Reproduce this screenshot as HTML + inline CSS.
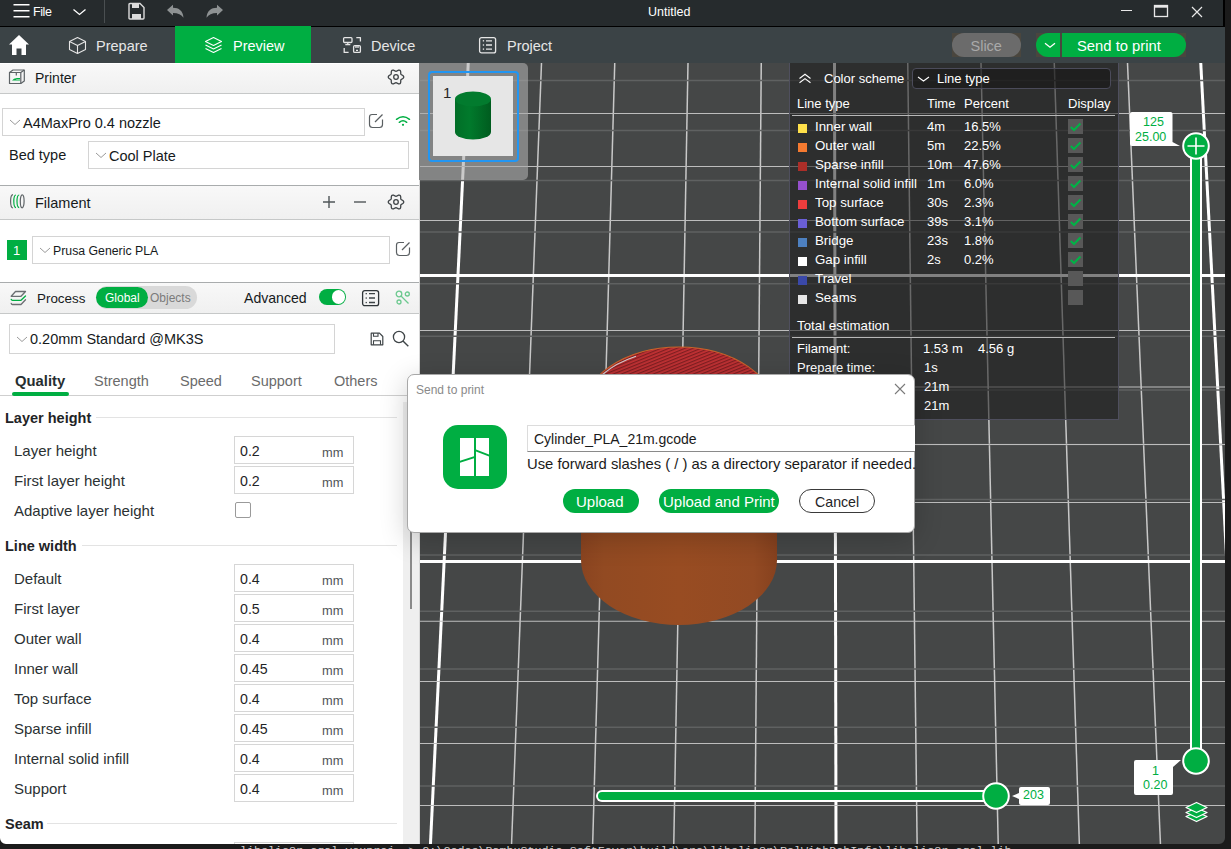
<!DOCTYPE html>
<html><head><meta charset="utf-8"><title>Bambu Studio - Send to print</title>
<style>
html,body{margin:0;padding:0;width:1231px;height:849px;overflow:hidden;background:#1b1b1b;font-family:"Liberation Sans",sans-serif}
.t{position:absolute;white-space:pre;line-height:20px;height:20px}
svg{display:block}
</style></head><body>
<div style="position:absolute;left:419px;top:63px;width:806px;height:781px;box-sizing:border-box;background:#454747"></div>
<svg style="position:absolute;left:420px;top:63px" width="805" height="781" viewBox="0 0 805 781"><line x1="-98.25" y1="0" x2="-151.77" y2="781" stroke="#c8c8c8" stroke-width="1.5"/><line x1="-25.00" y1="0" x2="-70.66" y2="781" stroke="#c8c8c8" stroke-width="1.5"/><line x1="48.25" y1="0" x2="10.45" y2="781" stroke="#ffffff" stroke-width="3"/><line x1="121.50" y1="0" x2="91.56" y2="781" stroke="#c8c8c8" stroke-width="1.5"/><line x1="194.75" y1="0" x2="172.67" y2="781" stroke="#c8c8c8" stroke-width="1.5"/><line x1="268.00" y1="0" x2="253.78" y2="781" stroke="#c8c8c8" stroke-width="1.5"/><line x1="341.25" y1="0" x2="334.89" y2="781" stroke="#c8c8c8" stroke-width="1.5"/><line x1="414.50" y1="0" x2="416.00" y2="781" stroke="#ffffff" stroke-width="3"/><line x1="487.75" y1="0" x2="497.11" y2="781" stroke="#c8c8c8" stroke-width="1.5"/><line x1="561.00" y1="0" x2="578.22" y2="781" stroke="#c8c8c8" stroke-width="1.5"/><line x1="634.25" y1="0" x2="659.33" y2="781" stroke="#c8c8c8" stroke-width="1.5"/><line x1="707.50" y1="0" x2="740.44" y2="781" stroke="#c8c8c8" stroke-width="1.5"/><line x1="780.75" y1="0" x2="821.55" y2="781" stroke="#ffffff" stroke-width="3"/><line x1="854.00" y1="0" x2="902.66" y2="781" stroke="#c8c8c8" stroke-width="1.5"/><line x1="927.25" y1="0" x2="983.77" y2="781" stroke="#c8c8c8" stroke-width="1.5"/><line x1="0" y1="17.40" x2="805" y2="17.40" stroke="#5f6161" stroke-width="1.5"/><line x1="0" y1="67.50" x2="805" y2="67.50" stroke="#5f6161" stroke-width="1.5"/><line x1="0" y1="117.40" x2="805" y2="117.40" stroke="#5f6161" stroke-width="1.5"/><line x1="0" y1="168.90" x2="805" y2="168.90" stroke="#5f6161" stroke-width="1.5"/><line x1="0" y1="220.70" x2="805" y2="220.70" stroke="#5f6161" stroke-width="1.5"/><line x1="0" y1="273.20" x2="805" y2="273.20" stroke="#5f6161" stroke-width="1.5"/><line x1="0" y1="327.00" x2="805" y2="327.00" stroke="#5f6161" stroke-width="1.5"/><line x1="0" y1="381.50" x2="805" y2="381.50" stroke="#5f6161" stroke-width="1.5"/><line x1="0" y1="436.60" x2="805" y2="436.60" stroke="#5f6161" stroke-width="1.5"/><line x1="0" y1="492.00" x2="805" y2="492.00" stroke="#5f6161" stroke-width="1.5"/><line x1="0" y1="548.30" x2="805" y2="548.30" stroke="#5f6161" stroke-width="1.5"/><line x1="0" y1="605.90" x2="805" y2="605.90" stroke="#5f6161" stroke-width="1.5"/><line x1="0" y1="664.20" x2="805" y2="664.20" stroke="#5f6161" stroke-width="1.5"/><line x1="0" y1="723.10" x2="805" y2="723.10" stroke="#5f6161" stroke-width="1.5"/><line x1="0" y1="50.50" x2="805" y2="50.50" stroke="#bdbdbd" stroke-width="1.05"/><line x1="0" y1="103.50" x2="805" y2="103.50" stroke="#bdbdbd" stroke-width="1.05"/><line x1="0" y1="157.50" x2="805" y2="157.50" stroke="#bdbdbd" stroke-width="1.05"/><line x1="0" y1="267.50" x2="805" y2="267.50" stroke="#bdbdbd" stroke-width="1.05"/><line x1="0" y1="324.00" x2="805" y2="324.00" stroke="#bdbdbd" stroke-width="1.05"/><line x1="0" y1="381.50" x2="805" y2="381.50" stroke="#bdbdbd" stroke-width="1.05"/><line x1="0" y1="439.50" x2="805" y2="439.50" stroke="#bdbdbd" stroke-width="1.05"/><line x1="0" y1="558.30" x2="805" y2="558.30" stroke="#bdbdbd" stroke-width="1.05"/><line x1="0" y1="618.50" x2="805" y2="618.50" stroke="#bdbdbd" stroke-width="1.05"/><line x1="0" y1="680.50" x2="805" y2="680.50" stroke="#bdbdbd" stroke-width="1.05"/><line x1="0" y1="742.50" x2="805" y2="742.50" stroke="#bdbdbd" stroke-width="1.05"/><line x1="0" y1="212.50" x2="805" y2="212.50" stroke="#ffffff" stroke-width="3"/><line x1="0" y1="498.50" x2="805" y2="498.50" stroke="#ffffff" stroke-width="3"/></svg>
<svg style="position:absolute;left:0;top:0" width="1231" height="849" viewBox="0 0 1231 849">
<defs>
 <pattern id="hatch" width="3" height="3" patternUnits="userSpaceOnUse" patternTransform="rotate(-22)">
   <rect width="3" height="3" fill="#c23234"/><rect width="3" height="1.2" fill="#7e1e21"/>
 </pattern>
 <linearGradient id="body" x1="0" x2="1" y1="0" y2="0">
   <stop offset="0" stop-color="#8a4420"/><stop offset="0.12" stop-color="#924a22"/><stop offset="0.5" stop-color="#984c22"/><stop offset="0.88" stop-color="#934a23"/><stop offset="1" stop-color="#86411e"/>
 </linearGradient>
</defs>
<path d="M581,414 L581,560 A98,65 0 0 0 777,560 L777,414 Z" fill="url(#body)"/>
<ellipse cx="679" cy="414" rx="98" ry="67" fill="url(#hatch)" stroke="#c8642a" stroke-width="1.2"/>
<path d="M602.5,374.5 A96.3,65.3 0 0 1 636,356.3" fill="none" stroke="#cfcfcf" stroke-width="1.1"/>
</svg>
<div style="position:absolute;left:419px;top:63px;width:109px;height:117px;box-sizing:border-box;background:rgba(170,170,170,0.62);border-radius:0 5px 5px 0"></div>
<div style="position:absolute;left:428px;top:71px;width:91px;height:91px;box-sizing:border-box;border:2px solid #2196f3;border-radius:4px"></div>
<div style="position:absolute;left:433px;top:76px;width:80px;height:80px;box-sizing:border-box;background:#e6e6e6"></div>
<div class="t" style="left:443px;top:83px;font-size:15px;color:#262626;font-weight:normal;font-family:'Liberation Sans',sans-serif;">1</div>
<svg style="position:absolute;left:454px;top:90px;overflow:visible;" width="38" height="52" viewBox="0 0 38 52">
<defs><linearGradient id="gc" x1="0" x2="1"><stop offset="0" stop-color="#016e27"/><stop offset="0.4" stop-color="#017a2c"/><stop offset="1" stop-color="#005c1f"/></linearGradient></defs>
<path d="M1,9 L1,42 A18,7.5 0 0 0 37,42 L37,9 Z" fill="url(#gc)"/>
<ellipse cx="19" cy="9" rx="18" ry="7.5" fill="#027b2e"/>
</svg>
<div style="position:absolute;left:1190px;top:146px;width:12px;height:615px;box-sizing:border-box;background:#fff"></div>
<div style="position:absolute;left:1192px;top:146px;width:8px;height:615px;box-sizing:border-box;background:#00ae42"></div>
<svg style="position:absolute;left:1182px;top:132px;overflow:visible;" width="28" height="28" viewBox="0 0 28 28"><circle cx="14" cy="14" r="12.8" fill="#00ae42" stroke="#fff" stroke-width="2"/><path d="M14,5.5 V22.5 M5.5,14 H22.5" stroke="#fff" stroke-width="1.6"/></svg>
<svg style="position:absolute;left:1182px;top:747px;overflow:visible;" width="28" height="28" viewBox="0 0 28 28"><circle cx="14" cy="14" r="12.8" fill="#00ae42" stroke="#fff" stroke-width="2"/></svg>
<svg style="position:absolute;left:1129px;top:111px;overflow:visible;" width="53" height="36" viewBox="0 0 53 36"><path d="M3,1 H41.5 Q43.5,1 43.5,3 V31 L51,35 H3 Q1,35 1,33 V3 Q1,1 3,1 Z" fill="#fff"/></svg>
<div class="t" style="left:1143px;top:112px;font-size:12.5px;color:#00ae42;font-weight:normal;font-family:'Liberation Sans',sans-serif;">125</div>
<div class="t" style="left:1135px;top:127px;font-size:12.5px;color:#00ae42;font-weight:normal;font-family:'Liberation Sans',sans-serif;">25.00</div>
<svg style="position:absolute;left:1133px;top:759px;overflow:visible;" width="50" height="37" viewBox="0 0 50 37"><path d="M3,1 H40 L48,1 L40,8 V34 Q40,36 38,36 H3 Q1,36 1,34 V3 Q1,1 3,1 Z" fill="#fff"/></svg>
<div class="t" style="left:1152px;top:761px;font-size:12.5px;color:#00ae42;font-weight:normal;font-family:'Liberation Sans',sans-serif;">1</div>
<div class="t" style="left:1143px;top:775px;font-size:12.5px;color:#00ae42;font-weight:normal;font-family:'Liberation Sans',sans-serif;">0.20</div>
<svg style="position:absolute;left:1184px;top:801px;overflow:visible;" width="26" height="23" viewBox="0 0 26 23"><g fill="#00ae42" stroke="#fff" stroke-width="1.3" stroke-linejoin="round">
<path d="M12.5,11 L23,15.5 L12.5,20.5 L2,15.5 Z"/>
<path d="M12.5,7 L23,11.5 L12.5,16.5 L2,11.5 Z"/>
<path d="M12.5,1.5 L23,6.5 L12.5,11.5 L2,6.5 Z"/></g></svg>
<div style="position:absolute;left:596px;top:790px;width:400px;height:12px;box-sizing:border-box;background:#fff;border-radius:6px"></div>
<div style="position:absolute;left:598px;top:792px;width:400px;height:8px;box-sizing:border-box;background:#00ae42;border-radius:4px 0 0 4px"></div>
<svg style="position:absolute;left:982px;top:782px;overflow:visible;" width="28" height="28" viewBox="0 0 28 28"><circle cx="14" cy="14" r="12.8" fill="#00ae42" stroke="#fff" stroke-width="2"/></svg>
<svg style="position:absolute;left:1011px;top:786px;overflow:visible;" width="40" height="20" viewBox="0 0 40 20"><path d="M10,1 H37 Q39,1 39,3 V17 Q39,19 37,19 H10 Q8,19 8,17 V13 L1,10 L8,7 V3 Q8,1 10,1 Z" fill="#fff"/></svg>
<div class="t" style="left:1023px;top:785px;font-size:12.5px;color:#00ae42;font-weight:normal;font-family:'Liberation Sans',sans-serif;">203</div>
<div style="position:absolute;left:0px;top:0px;width:1225px;height:26px;box-sizing:border-box;background:#262b2d"></div>
<div style="position:absolute;left:1223px;top:0px;width:2px;height:26px;box-sizing:border-box;background:#000"></div>
<div style="position:absolute;left:0px;top:26px;width:1225px;height:1px;box-sizing:border-box;background:#000"></div>
<div style="position:absolute;left:0px;top:27px;width:1225px;height:36px;box-sizing:border-box;background:#3b4346"></div>
<svg style="position:absolute;left:12px;top:3px;overflow:visible;" width="19" height="16" viewBox="0 0 19 16"><path d="M1.5,1.8 H17.5 M1.5,7.8 H17.5 M1.5,13.8 H17.5" stroke="#fff" stroke-width="1.5"/></svg>
<div class="t" style="left:33px;top:2px;font-size:12.5px;color:#ffffff;font-weight:normal;font-family:'Liberation Sans',sans-serif;letter-spacing:-0.4px">File</div>
<svg style="position:absolute;left:72px;top:8px;overflow:visible;" width="15" height="8" viewBox="0 0 15 8"><path d="M1.5,1.5 L7.5,6.5 L13.5,1.5" fill="none" stroke="#fff" stroke-width="1.3"/></svg>
<div style="position:absolute;left:104px;top:0px;width:1px;height:23px;box-sizing:border-box;background:#4a4f51"></div>
<svg style="position:absolute;left:127px;top:2px;overflow:visible;" width="19" height="19" viewBox="0 0 19 19"><path d="M2,2.5 Q2,1.5 3,1.5 H13 L17,5.5 V16 Q17,17 16,17 H3 Q2,17 2,16 Z" fill="none" stroke="#dcdcdc" stroke-width="1.4"/><rect x="5" y="1.5" width="7" height="4.5" fill="#dcdcdc"/><rect x="5" y="12" width="9" height="5" fill="#dcdcdc"/></svg>
<svg style="position:absolute;left:166px;top:4px;overflow:visible;" width="19" height="15" viewBox="0 0 19 15"><path d="M1,6 L7,0.8 V3.8 C13,3.8 17,7 17.5,13.8 C15.5,10.5 12,9 7,9 V11.5 Z" fill="#8e9293"/></svg>
<svg style="position:absolute;left:205px;top:4px;overflow:visible;" width="19" height="15" viewBox="0 0 19 15"><path d="M18,6 L12,0.8 V3.8 C6,3.8 2,7 1.5,13.8 C3.5,10.5 7,9 12,9 V11.5 Z" fill="#8e9293"/></svg>
<div class="t" style="left:648px;top:2px;font-size:12.5px;color:#ffffff;font-weight:normal;font-family:'Liberation Sans',sans-serif;">Untitled</div>
<div style="position:absolute;left:1121px;top:10px;width:11px;height:1px;box-sizing:border-box;background:#e8e8e8"></div>
<svg style="position:absolute;left:1153px;top:4px;overflow:visible;" width="17" height="15" viewBox="0 0 17 15"><rect x="1.5" y="1.5" width="13" height="11" fill="none" stroke="#e8e8e8" stroke-width="1.3"/><rect x="1.5" y="1.5" width="13" height="2.2" fill="#e8e8e8"/></svg>
<svg style="position:absolute;left:1190.5px;top:6px;overflow:visible;" width="12" height="12" viewBox="0 0 12 12"><path d="M1,1 L11,11 M11,1 L1,11" stroke="#e8e8e8" stroke-width="1.2"/></svg>
<svg style="position:absolute;left:8px;top:34px;overflow:visible;" width="22" height="22" viewBox="0 0 22 22"><path d="M11,1 L21,10.5 H18 V21 H13.5 V14.5 H8.5 V21 H4 V10.5 H1 Z" fill="#fff"/></svg>
<svg style="position:absolute;left:68px;top:36px;overflow:visible;" width="19" height="19" viewBox="0 0 19 19"><path d="M9.5,1.5 L17.5,5.5 V13.5 L9.5,17.5 L1.5,13.5 V5.5 Z M1.5,5.5 L9.5,9.5 L17.5,5.5 M9.5,9.5 V17.5" fill="none" stroke="#e6e6e6" stroke-width="1.1" stroke-linejoin="round"/></svg>
<div class="t" style="left:96px;top:36px;font-size:14.5px;color:#e6e6e6;font-weight:normal;font-family:'Liberation Sans',sans-serif;">Prepare</div>
<div style="position:absolute;left:175px;top:26px;width:136px;height:37px;box-sizing:border-box;background:#00ae42"></div>
<svg style="position:absolute;left:204px;top:36px;overflow:visible;" width="19" height="19" viewBox="0 0 19 19"><g fill="none" stroke="#fff" stroke-width="1.1" stroke-linejoin="round"><path d="M9.5,1.5 L17.5,5.5 L9.5,9.5 L1.5,5.5 Z"/><path d="M1.5,9 L9.5,13 L17.5,9"/><path d="M1.5,12.5 L9.5,16.5 L17.5,12.5"/></g></svg>
<div class="t" style="left:233px;top:36px;font-size:14.5px;color:#ffffff;font-weight:normal;font-family:'Liberation Sans',sans-serif;">Preview</div>
<svg style="position:absolute;left:342px;top:36px;overflow:visible;" width="21" height="19" viewBox="0 0 21 19"><g fill="none" stroke="#e6e6e6" stroke-width="1.3" stroke-linejoin="round"><rect x="1.6" y="1.6" width="8.4" height="4.9" rx="1"/><path d="M5.8,6.5 V8.5 M3.3,8.6 H8.3"/><path d="M14.3,1.6 H18.4 V5.6"/><path d="M2.2,12 V16.4 H6.6"/><rect x="11.6" y="9.6" width="6.8" height="6.8" rx="1.2"/><path d="M14,9.6 V12 M16,9.6 V12 M14,14.3 H16"/></g></svg>
<div class="t" style="left:371px;top:36px;font-size:14.5px;color:#e6e6e6;font-weight:normal;font-family:'Liberation Sans',sans-serif;">Device</div>
<svg style="position:absolute;left:478px;top:36px;overflow:visible;" width="20" height="19" viewBox="0 0 20 19"><g fill="none" stroke="#e6e6e6" stroke-width="1.3"><rect x="1.6" y="1.6" width="16" height="15.3" rx="2"/><path d="M8,4.8 H14 M8,9 H14 M8,13.1 H14"/></g><g fill="#e6e6e6"><rect x="4.8" y="4.1" width="1.3" height="1.4"/><rect x="4.8" y="8.3" width="1.3" height="1.4"/><rect x="4.8" y="12.4" width="1.3" height="1.4"/></g></svg>
<div class="t" style="left:507px;top:36px;font-size:14.5px;color:#e6e6e6;font-weight:normal;font-family:'Liberation Sans',sans-serif;">Project</div>
<div style="position:absolute;left:952px;top:33px;width:69px;height:24px;box-sizing:border-box;background:#4a463e"></div>
<div style="position:absolute;left:952px;top:33px;width:69px;height:24px;box-sizing:border-box;background:#6b6b6b;border-radius:12px"></div>
<div class="t" style="left:970.5px;top:36px;font-size:14.5px;color:#a9a9a9;font-weight:normal;font-family:'Liberation Sans',sans-serif;">Slice</div>
<div style="position:absolute;left:1036px;top:33px;width:150px;height:24px;box-sizing:border-box;background:#4a463e"></div>
<div style="position:absolute;left:1036px;top:33px;width:24px;height:24px;box-sizing:border-box;background:#00ae42;border-radius:12px 0 0 12px"></div>
<div style="position:absolute;left:1062px;top:33px;width:124px;height:24px;box-sizing:border-box;background:#00ae42;border-radius:0 12px 12px 0"></div>
<svg style="position:absolute;left:1044px;top:42px;overflow:visible;" width="12" height="7" viewBox="0 0 12 7"><path d="M1,1.2 L6,5.2 L11,1.2" fill="none" stroke="#fff" stroke-width="1.3"/></svg>
<div class="t" style="left:1077px;top:36px;font-size:14.8px;color:#ffffff;font-weight:normal;font-family:'Liberation Sans',sans-serif;">Send to print</div>
<div style="position:absolute;left:0px;top:63px;width:419px;height:781px;box-sizing:border-box;background:#ffffff"></div>
<div style="position:absolute;left:0px;top:64px;width:419px;height:29px;box-sizing:border-box;background:linear-gradient(#f8f8f8,#f0f0f0)"></div>
<div style="position:absolute;left:0px;top:93px;width:419px;height:1px;box-sizing:border-box;background:#c6c8c8"></div>
<svg style="position:absolute;left:8px;top:69px;overflow:visible;" width="19" height="17" viewBox="0 0 19 17"><g fill="none" stroke="#5d6366" stroke-width="1.2" stroke-linejoin="round"><path d="M1.5,3.5 L5,1 H16.3 V12 L12.8,14.5 H1.5 Z"/><path d="M1.5,3.5 H12.8 V14.5 M12.8,3.5 L16.3,1"/><path d="M8.3,3.5 V6.5"/></g><path d="M4,11.6 Q5.5,9 9,9 H12 V10 H8.2 V10.6 H12 V11.6 Z" fill="#00ae42"/></svg>
<div class="t" style="left:35px;top:68px;font-size:14px;color:#161a1c;font-weight:normal;font-family:'Liberation Sans',sans-serif;">Printer</div>
<svg style="position:absolute;left:387px;top:68px;overflow:visible;" width="18" height="18" viewBox="0 0 18 18"><path d="M16.75,9.00 L16.58,9.66 L16.12,10.25 L15.47,10.73 L14.80,11.11 L14.25,11.45 L13.89,11.82 L13.74,12.32 L13.73,12.97 L13.74,13.74 L13.64,14.53 L13.36,15.23 L12.88,15.71 L12.22,15.90 L11.47,15.79 L10.73,15.47 L10.07,15.08 L9.50,14.77 L9.00,14.65 L8.50,14.77 L7.93,15.08 L7.27,15.47 L6.53,15.79 L5.78,15.90 L5.13,15.71 L4.64,15.23 L4.36,14.53 L4.26,13.74 L4.27,12.97 L4.26,12.32 L4.11,11.83 L3.75,11.45 L3.20,11.11 L2.53,10.73 L1.88,10.25 L1.42,9.66 L1.25,9.00 L1.42,8.34 L1.88,7.75 L2.53,7.27 L3.20,6.89 L3.75,6.55 L4.11,6.17 L4.26,5.68 L4.27,5.03 L4.26,4.26 L4.36,3.47 L4.64,2.77 L5.12,2.29 L5.78,2.10 L6.53,2.21 L7.27,2.53 L7.93,2.92 L8.50,3.23 L9.00,3.35 L9.50,3.23 L10.07,2.92 L10.73,2.53 L11.47,2.21 L12.22,2.10 L12.87,2.29 L13.36,2.77 L13.64,3.47 L13.74,4.26 L13.73,5.03 L13.74,5.68 L13.89,6.18 L14.25,6.55 L14.80,6.89 L15.47,7.27 L16.12,7.75 L16.58,8.34 L16.75,9.00 Z" fill="none" stroke="#3f4447" stroke-width="1.3" stroke-linejoin="round"/><circle cx="9" cy="9" r="2.3" fill="none" stroke="#3f4447" stroke-width="1.3"/></svg>
<div style="position:absolute;left:2px;top:108px;width:363px;height:28px;box-sizing:border-box;border:1px solid #d4d4d4;background:#fff"></div>
<svg style="position:absolute;left:9px;top:119px;overflow:visible;" width="12" height="7" viewBox="0 0 12 7"><path d="M1,1 L6,5.5 L11,1" fill="none" stroke="#9a9a9a" stroke-width="1"/></svg>
<div class="t" style="left:23px;top:113px;font-size:14.5px;color:#161a1c;font-weight:normal;font-family:'Liberation Sans',sans-serif;">A4MaxPro 0.4 nozzle</div>
<svg style="position:absolute;left:368px;top:113px;overflow:visible;" width="16" height="16" viewBox="0 0 16 16"><path d="M9,1.5 H4 Q1.5,1.5 1.5,4 V11.5 Q1.5,14.5 4.5,14.5 H11.5 Q14.5,14.5 14.5,11.5 V6.5" fill="none" stroke="#5a5f62" stroke-width="1.2"/><path d="M7,9 L14.5,1.5" stroke="#5a5f62" stroke-width="1.2"/></svg>
<svg style="position:absolute;left:395px;top:115px;overflow:visible;" width="17" height="13" viewBox="0 0 17 13"><g fill="none" stroke="#00ae42" stroke-width="1.5" stroke-linecap="round"><path d="M1.5,4.3 Q8,-0.8 14.5,4.3"/><path d="M4.3,7.3 Q8,4.3 11.7,7.3"/></g><circle cx="8" cy="9.8" r="1.1" fill="#00ae42"/></svg>
<div class="t" style="left:9px;top:145px;font-size:14.5px;color:#161a1c;font-weight:normal;font-family:'Liberation Sans',sans-serif;">Bed type</div>
<div style="position:absolute;left:88px;top:141px;width:321px;height:28px;box-sizing:border-box;border:1px solid #d4d4d4;background:#fff"></div>
<svg style="position:absolute;left:95px;top:152px;overflow:visible;" width="12" height="7" viewBox="0 0 12 7"><path d="M1,1 L6,5.5 L11,1" fill="none" stroke="#9a9a9a" stroke-width="1"/></svg>
<div class="t" style="left:109px;top:146px;font-size:14.5px;color:#161a1c;font-weight:normal;font-family:'Liberation Sans',sans-serif;">Cool Plate</div>
<div style="position:absolute;left:0px;top:185px;width:419px;height:1px;box-sizing:border-box;background:#a9acad"></div>
<div style="position:absolute;left:0px;top:186px;width:419px;height:33px;box-sizing:border-box;background:linear-gradient(#f8f8f8,#f0f0f0)"></div>
<div style="position:absolute;left:0px;top:219px;width:419px;height:1px;box-sizing:border-box;background:#c6c8c8"></div>
<svg style="position:absolute;left:9px;top:193px;overflow:visible;" width="17" height="17" viewBox="0 0 17 17"><g fill="none" stroke-width="1.2"><path d="M4,1.6 Q1.6,1.6 1.6,8.3 Q1.6,15 4,15" stroke="#5d6366"/><path d="M7,2 Q4.8,2 4.8,8.3 Q4.8,14.6 7,14.6" stroke="#00ae42"/><path d="M10.2,2 Q8,2 8,8.3 Q8,14.6 10.2,14.6" stroke="#00ae42"/><ellipse cx="13.2" cy="8.3" rx="1.9" ry="6.5" stroke="#5d6366"/></g></svg>
<div class="t" style="left:35px;top:193px;font-size:14.5px;color:#161a1c;font-weight:normal;font-family:'Liberation Sans',sans-serif;">Filament</div>
<svg style="position:absolute;left:322px;top:195px;overflow:visible;" width="14" height="14" viewBox="0 0 14 14"><path d="M7,1 V13 M1,7 H13" stroke="#4f5558" stroke-width="1.4"/></svg>
<svg style="position:absolute;left:353px;top:195px;overflow:visible;" width="14" height="14" viewBox="0 0 14 14"><path d="M1,7 H13" stroke="#4f5558" stroke-width="1.4"/></svg>
<svg style="position:absolute;left:387px;top:193px;overflow:visible;" width="18" height="18" viewBox="0 0 18 18"><path d="M16.75,9.00 L16.58,9.66 L16.12,10.25 L15.47,10.73 L14.80,11.11 L14.25,11.45 L13.89,11.82 L13.74,12.32 L13.73,12.97 L13.74,13.74 L13.64,14.53 L13.36,15.23 L12.88,15.71 L12.22,15.90 L11.47,15.79 L10.73,15.47 L10.07,15.08 L9.50,14.77 L9.00,14.65 L8.50,14.77 L7.93,15.08 L7.27,15.47 L6.53,15.79 L5.78,15.90 L5.13,15.71 L4.64,15.23 L4.36,14.53 L4.26,13.74 L4.27,12.97 L4.26,12.32 L4.11,11.83 L3.75,11.45 L3.20,11.11 L2.53,10.73 L1.88,10.25 L1.42,9.66 L1.25,9.00 L1.42,8.34 L1.88,7.75 L2.53,7.27 L3.20,6.89 L3.75,6.55 L4.11,6.17 L4.26,5.68 L4.27,5.03 L4.26,4.26 L4.36,3.47 L4.64,2.77 L5.12,2.29 L5.78,2.10 L6.53,2.21 L7.27,2.53 L7.93,2.92 L8.50,3.23 L9.00,3.35 L9.50,3.23 L10.07,2.92 L10.73,2.53 L11.47,2.21 L12.22,2.10 L12.87,2.29 L13.36,2.77 L13.64,3.47 L13.74,4.26 L13.73,5.03 L13.74,5.68 L13.89,6.18 L14.25,6.55 L14.80,6.89 L15.47,7.27 L16.12,7.75 L16.58,8.34 L16.75,9.00 Z" fill="none" stroke="#3f4447" stroke-width="1.3" stroke-linejoin="round"/><circle cx="9" cy="9" r="2.3" fill="none" stroke="#3f4447" stroke-width="1.3"/></svg>
<div style="position:absolute;left:7px;top:240px;width:20px;height:20px;box-sizing:border-box;background:#00ae42"></div>
<div class="t" style="left:13px;top:241px;font-size:13px;color:#ffffff;font-weight:normal;font-family:'Liberation Sans',sans-serif;">1</div>
<div style="position:absolute;left:32px;top:236px;width:358px;height:28px;box-sizing:border-box;border:1px solid #d4d4d4;background:#fff"></div>
<svg style="position:absolute;left:39px;top:247px;overflow:visible;" width="12" height="7" viewBox="0 0 12 7"><path d="M1,1 L6,5.5 L11,1" fill="none" stroke="#9a9a9a" stroke-width="1"/></svg>
<div class="t" style="left:53px;top:241px;font-size:12.3px;color:#161a1c;font-weight:normal;font-family:'Liberation Sans',sans-serif;">Prusa Generic PLA</div>
<svg style="position:absolute;left:395px;top:241px;overflow:visible;" width="16" height="16" viewBox="0 0 16 16"><path d="M9,1.5 H4 Q1.5,1.5 1.5,4 V11.5 Q1.5,14.5 4.5,14.5 H11.5 Q14.5,14.5 14.5,11.5 V6.5" fill="none" stroke="#5a5f62" stroke-width="1.2"/><path d="M7,9 L14.5,1.5" stroke="#5a5f62" stroke-width="1.2"/></svg>
<div style="position:absolute;left:0px;top:282px;width:419px;height:1px;box-sizing:border-box;background:#a9acad"></div>
<div style="position:absolute;left:0px;top:283px;width:419px;height:30px;box-sizing:border-box;background:linear-gradient(#f8f8f8,#f0f0f0)"></div>
<div style="position:absolute;left:0px;top:313px;width:419px;height:1px;box-sizing:border-box;background:#c6c8c8"></div>
<svg style="position:absolute;left:10px;top:290px;overflow:visible;" width="18" height="16" viewBox="0 0 18 16"><g fill="none" stroke-width="1.3" stroke-linejoin="round" stroke-linecap="round"><path d="M5.5,1.5 H15.5 L11,6.3 H1.2 Z" stroke="#6b6f72"/><path d="M1.2,9.3 Q1.5,10.3 2.5,10.3 H11 L15.5,6" stroke="#00ae42"/><path d="M1.2,13.3 Q1.5,14.5 2.5,14.5 H11 L15.5,9.8" stroke="#6b6f72"/></g></svg>
<div class="t" style="left:37px;top:289px;font-size:13.4px;color:#161a1c;font-weight:normal;font-family:'Liberation Sans',sans-serif;">Process</div>
<div style="position:absolute;left:96px;top:286px;width:101px;height:23px;box-sizing:border-box;background:#d9d9d9;border-radius:12px"></div>
<div style="position:absolute;left:96px;top:287px;width:52px;height:21px;box-sizing:border-box;background:#00ae42;border-radius:11px"></div>
<div class="t" style="left:105px;top:288px;font-size:12px;color:#ffffff;font-weight:normal;font-family:'Liberation Sans',sans-serif;">Global</div>
<div class="t" style="left:150px;top:288px;font-size:12px;color:#7b7b7b;font-weight:normal;font-family:'Liberation Sans',sans-serif;">Objects</div>
<div class="t" style="left:244px;top:288px;font-size:14.1px;color:#161a1c;font-weight:normal;font-family:'Liberation Sans',sans-serif;">Advanced</div>
<div style="position:absolute;left:319px;top:289px;width:27px;height:16px;box-sizing:border-box;background:#00ae42;border-radius:8px"></div>
<div style="position:absolute;left:331.8px;top:290.3px;width:13.5px;height:13.5px;box-sizing:border-box;background:#fff;border-radius:50%"></div>
<svg style="position:absolute;left:361px;top:289px;overflow:visible;" width="19" height="18" viewBox="0 0 19 18"><rect x="1.6" y="1.6" width="16" height="15" rx="2.2" fill="none" stroke="#2f3538" stroke-width="1.3"/><path d="M8,4.6 H14 M8,9 H14 M8,13.5 H14" stroke="#3e4447" stroke-width="1.4"/><g fill="#3e4447"><rect x="4.6" y="4" width="1.3" height="1.3"/><rect x="4.6" y="8.4" width="1.3" height="1.3"/><rect x="4.6" y="12.9" width="1.3" height="1.3"/></g></svg>
<svg style="position:absolute;left:395px;top:290px;overflow:visible;" width="16" height="15" viewBox="0 0 16 15"><g fill="none" stroke="#6cc98f" stroke-width="1.3"><circle cx="4" cy="4" r="2.8"/><circle cx="4" cy="12" r="2"/><circle cx="12.3" cy="4" r="2"/><path d="M6,6 L13.5,13.5"/></g></svg>
<div style="position:absolute;left:9px;top:324px;width:326px;height:30px;box-sizing:border-box;border:1px solid #d4d4d4;background:#fff"></div>
<svg style="position:absolute;left:16px;top:336px;overflow:visible;" width="12" height="7" viewBox="0 0 12 7"><path d="M1,1 L6,5.5 L11,1" fill="none" stroke="#9a9a9a" stroke-width="1"/></svg>
<div class="t" style="left:30px;top:329px;font-size:14.5px;color:#161a1c;font-weight:normal;font-family:'Liberation Sans',sans-serif;">0.20mm Standard @MK3S</div>
<svg style="position:absolute;left:370px;top:332px;overflow:visible;" width="14" height="14" viewBox="0 0 14 14"><path d="M1.2,1.2 H9.5 L12.8,4.5 V12.8 H1.2 Z" fill="none" stroke="#3e4447" stroke-width="1.2" stroke-linejoin="round"/><path d="M3.5,1.2 V4.3 H8 V1.2 M3.5,12.8 V8.8 H10.5 V12.8" fill="none" stroke="#3e4447" stroke-width="1.1"/></svg>
<svg style="position:absolute;left:392px;top:330px;overflow:visible;" width="18" height="18" viewBox="0 0 18 18"><circle cx="7" cy="7" r="5.6" fill="none" stroke="#3e4447" stroke-width="1.3"/><path d="M11,11 L16.3,16.3" stroke="#3e4447" stroke-width="1.4"/></svg>
<div class="t" style="left:15px;top:371px;font-size:14.8px;color:#262e30;font-weight:bold;font-family:'Liberation Sans',sans-serif;">Quality</div>
<div class="t" style="left:94px;top:371px;font-size:14.5px;color:#6b6b6b;font-weight:normal;font-family:'Liberation Sans',sans-serif;">Strength</div>
<div class="t" style="left:180px;top:371px;font-size:14.5px;color:#6b6b6b;font-weight:normal;font-family:'Liberation Sans',sans-serif;">Speed</div>
<div class="t" style="left:251px;top:371px;font-size:14.5px;color:#6b6b6b;font-weight:normal;font-family:'Liberation Sans',sans-serif;">Support</div>
<div class="t" style="left:334px;top:371px;font-size:14.5px;color:#6b6b6b;font-weight:normal;font-family:'Liberation Sans',sans-serif;">Others</div>
<div style="position:absolute;left:0px;top:395px;width:407px;height:1px;box-sizing:border-box;background:#cfcfcf"></div>
<div style="position:absolute;left:12px;top:392px;width:57px;height:4px;box-sizing:border-box;background:#00ae42;border-radius:2px"></div>
<div style="position:absolute;left:403px;top:402px;width:16px;height:442px;box-sizing:border-box;background:#efefef"></div>
<div style="position:absolute;left:419px;top:180px;width:1px;height:664px;box-sizing:border-box;background:#d8d8d8"></div>
<div style="position:absolute;left:410px;top:402px;width:2px;height:207px;box-sizing:border-box;background:#8a8a8a"></div>
<div class="t" style="left:5px;top:408px;font-size:14.5px;color:#1f2426;font-weight:bold;font-family:'Liberation Sans',sans-serif;">Layer height</div>
<div style="position:absolute;left:96px;top:417px;width:301px;height:1px;box-sizing:border-box;background:#e3e3e3"></div>
<div class="t" style="left:14px;top:441px;font-size:15px;color:#2b3133;font-weight:normal;font-family:'Liberation Sans',sans-serif;">Layer height</div>
<div style="position:absolute;left:234px;top:436px;width:120px;height:28px;box-sizing:border-box;border:1px solid #d6d6d6;background:#fff"></div>
<div class="t" style="left:240px;top:441px;font-size:14.2px;color:#1f2426;font-weight:normal;font-family:'Liberation Sans',sans-serif;">0.2</div>
<div class="t" style="left:322px;top:443px;font-size:12.8px;color:#4f5457;font-weight:normal;font-family:'Liberation Sans',sans-serif;">mm</div>
<div class="t" style="left:14px;top:471px;font-size:15px;color:#2b3133;font-weight:normal;font-family:'Liberation Sans',sans-serif;">First layer height</div>
<div style="position:absolute;left:234px;top:466px;width:120px;height:28px;box-sizing:border-box;border:1px solid #d6d6d6;background:#fff"></div>
<div class="t" style="left:240px;top:471px;font-size:14.2px;color:#1f2426;font-weight:normal;font-family:'Liberation Sans',sans-serif;">0.2</div>
<div class="t" style="left:322px;top:473px;font-size:12.8px;color:#4f5457;font-weight:normal;font-family:'Liberation Sans',sans-serif;">mm</div>
<div class="t" style="left:14px;top:501px;font-size:15px;color:#2b3133;font-weight:normal;font-family:'Liberation Sans',sans-serif;">Adaptive layer height</div>
<div style="position:absolute;left:235px;top:502px;width:16px;height:16px;box-sizing:border-box;border:1px solid #9a9a9a;border-radius:2px;background:#fff"></div>
<div class="t" style="left:5px;top:536px;font-size:14.5px;color:#1f2426;font-weight:bold;font-family:'Liberation Sans',sans-serif;">Line width</div>
<div style="position:absolute;left:82px;top:545px;width:315px;height:1px;box-sizing:border-box;background:#e3e3e3"></div>
<div class="t" style="left:14px;top:569px;font-size:15px;color:#2b3133;font-weight:normal;font-family:'Liberation Sans',sans-serif;">Default</div>
<div style="position:absolute;left:234px;top:564px;width:120px;height:28px;box-sizing:border-box;border:1px solid #d6d6d6;background:#fff"></div>
<div class="t" style="left:240px;top:569px;font-size:14.2px;color:#1f2426;font-weight:normal;font-family:'Liberation Sans',sans-serif;">0.4</div>
<div class="t" style="left:322px;top:571px;font-size:12.8px;color:#4f5457;font-weight:normal;font-family:'Liberation Sans',sans-serif;">mm</div>
<div class="t" style="left:14px;top:599px;font-size:15px;color:#2b3133;font-weight:normal;font-family:'Liberation Sans',sans-serif;">First layer</div>
<div style="position:absolute;left:234px;top:594px;width:120px;height:28px;box-sizing:border-box;border:1px solid #d6d6d6;background:#fff"></div>
<div class="t" style="left:240px;top:599px;font-size:14.2px;color:#1f2426;font-weight:normal;font-family:'Liberation Sans',sans-serif;">0.5</div>
<div class="t" style="left:322px;top:601px;font-size:12.8px;color:#4f5457;font-weight:normal;font-family:'Liberation Sans',sans-serif;">mm</div>
<div class="t" style="left:14px;top:629px;font-size:15px;color:#2b3133;font-weight:normal;font-family:'Liberation Sans',sans-serif;">Outer wall</div>
<div style="position:absolute;left:234px;top:624px;width:120px;height:28px;box-sizing:border-box;border:1px solid #d6d6d6;background:#fff"></div>
<div class="t" style="left:240px;top:629px;font-size:14.2px;color:#1f2426;font-weight:normal;font-family:'Liberation Sans',sans-serif;">0.4</div>
<div class="t" style="left:322px;top:631px;font-size:12.8px;color:#4f5457;font-weight:normal;font-family:'Liberation Sans',sans-serif;">mm</div>
<div class="t" style="left:14px;top:659px;font-size:15px;color:#2b3133;font-weight:normal;font-family:'Liberation Sans',sans-serif;">Inner wall</div>
<div style="position:absolute;left:234px;top:654px;width:120px;height:28px;box-sizing:border-box;border:1px solid #d6d6d6;background:#fff"></div>
<div class="t" style="left:240px;top:659px;font-size:14.2px;color:#1f2426;font-weight:normal;font-family:'Liberation Sans',sans-serif;">0.45</div>
<div class="t" style="left:322px;top:661px;font-size:12.8px;color:#4f5457;font-weight:normal;font-family:'Liberation Sans',sans-serif;">mm</div>
<div class="t" style="left:14px;top:689px;font-size:15px;color:#2b3133;font-weight:normal;font-family:'Liberation Sans',sans-serif;">Top surface</div>
<div style="position:absolute;left:234px;top:684px;width:120px;height:28px;box-sizing:border-box;border:1px solid #d6d6d6;background:#fff"></div>
<div class="t" style="left:240px;top:689px;font-size:14.2px;color:#1f2426;font-weight:normal;font-family:'Liberation Sans',sans-serif;">0.4</div>
<div class="t" style="left:322px;top:691px;font-size:12.8px;color:#4f5457;font-weight:normal;font-family:'Liberation Sans',sans-serif;">mm</div>
<div class="t" style="left:14px;top:719px;font-size:15px;color:#2b3133;font-weight:normal;font-family:'Liberation Sans',sans-serif;">Sparse infill</div>
<div style="position:absolute;left:234px;top:714px;width:120px;height:28px;box-sizing:border-box;border:1px solid #d6d6d6;background:#fff"></div>
<div class="t" style="left:240px;top:719px;font-size:14.2px;color:#1f2426;font-weight:normal;font-family:'Liberation Sans',sans-serif;">0.45</div>
<div class="t" style="left:322px;top:721px;font-size:12.8px;color:#4f5457;font-weight:normal;font-family:'Liberation Sans',sans-serif;">mm</div>
<div class="t" style="left:14px;top:749px;font-size:15px;color:#2b3133;font-weight:normal;font-family:'Liberation Sans',sans-serif;">Internal solid infill</div>
<div style="position:absolute;left:234px;top:744px;width:120px;height:28px;box-sizing:border-box;border:1px solid #d6d6d6;background:#fff"></div>
<div class="t" style="left:240px;top:749px;font-size:14.2px;color:#1f2426;font-weight:normal;font-family:'Liberation Sans',sans-serif;">0.4</div>
<div class="t" style="left:322px;top:751px;font-size:12.8px;color:#4f5457;font-weight:normal;font-family:'Liberation Sans',sans-serif;">mm</div>
<div class="t" style="left:14px;top:779px;font-size:15px;color:#2b3133;font-weight:normal;font-family:'Liberation Sans',sans-serif;">Support</div>
<div style="position:absolute;left:234px;top:774px;width:120px;height:28px;box-sizing:border-box;border:1px solid #d6d6d6;background:#fff"></div>
<div class="t" style="left:240px;top:779px;font-size:14.2px;color:#1f2426;font-weight:normal;font-family:'Liberation Sans',sans-serif;">0.4</div>
<div class="t" style="left:322px;top:781px;font-size:12.8px;color:#4f5457;font-weight:normal;font-family:'Liberation Sans',sans-serif;">mm</div>
<div class="t" style="left:5px;top:814px;font-size:14.5px;color:#1f2426;font-weight:bold;font-family:'Liberation Sans',sans-serif;">Seam</div>
<div style="position:absolute;left:47px;top:823px;width:350px;height:1px;box-sizing:border-box;background:#e3e3e3"></div>
<div style="position:absolute;left:234px;top:842px;width:120px;height:10px;box-sizing:border-box;border:1px solid #d6d6d6;background:#fff"></div>
<div style="position:absolute;left:789px;top:63px;width:330px;height:357px;box-sizing:border-box;background:rgba(26,26,26,0.55);border:1px solid #4f4f5e;border-top:none"></div>
<svg style="position:absolute;left:798px;top:73px;overflow:visible;" width="15" height="11" viewBox="0 0 15 11"><path d="M1.5,5.5 L7,1.3 L12.5,5.5 M1.5,9.8 L7,5.6 L12.5,9.8" fill="none" stroke="#fff" stroke-width="1.1"/></svg>
<div class="t" style="left:824px;top:69px;font-size:13px;color:#ffffff;font-weight:normal;font-family:'Liberation Sans',sans-serif;">Color scheme</div>
<div style="position:absolute;left:912px;top:68px;width:199px;height:21px;box-sizing:border-box;background:rgba(20,20,20,0.55);border:1px solid #4b4b5a;border-radius:4px"></div>
<svg style="position:absolute;left:917px;top:76px;overflow:visible;" width="13" height="7" viewBox="0 0 13 7"><path d="M1,1 L6.5,5 L12,1" fill="none" stroke="#fff" stroke-width="1.1"/></svg>
<div class="t" style="left:937px;top:69px;font-size:13px;color:#ffffff;font-weight:normal;font-family:'Liberation Sans',sans-serif;">Line type</div>
<div class="t" style="left:797px;top:94px;font-size:13px;color:#ffffff;font-weight:normal;font-family:'Liberation Sans',sans-serif;">Line type</div>
<div class="t" style="left:927px;top:94px;font-size:13px;color:#ffffff;font-weight:normal;font-family:'Liberation Sans',sans-serif;">Time</div>
<div class="t" style="left:964px;top:94px;font-size:13px;color:#ffffff;font-weight:normal;font-family:'Liberation Sans',sans-serif;">Percent</div>
<div class="t" style="left:1068px;top:94px;font-size:13px;color:#ffffff;font-weight:normal;font-family:'Liberation Sans',sans-serif;">Display</div>
<div style="position:absolute;left:792px;top:115px;width:323px;height:1px;box-sizing:border-box;background:#b8b8b8"></div>
<div style="position:absolute;left:798px;top:124px;width:9px;height:9px;box-sizing:border-box;background:#ffe04a"></div>
<div class="t" style="left:815px;top:117px;font-size:13.3px;color:#ffffff;font-weight:normal;font-family:'Liberation Sans',sans-serif;">Inner wall</div>
<div class="t" style="left:927px;top:117px;font-size:13px;color:#ffffff;font-weight:normal;font-family:'Liberation Sans',sans-serif;">4m</div>
<div class="t" style="left:964px;top:117px;font-size:13px;color:#ffffff;font-weight:normal;font-family:'Liberation Sans',sans-serif;">16.5%</div>
<div style="position:absolute;left:1068px;top:119px;width:15px;height:15px;box-sizing:border-box;background:#585858"></div>
<svg style="position:absolute;left:1068px;top:119px;overflow:visible;" width="15" height="15" viewBox="0 0 15 15"><path d="M2.8,8 L6,11 L12.4,4.5" fill="none" stroke="#00b346" stroke-width="2"/></svg>
<div style="position:absolute;left:798px;top:143px;width:9px;height:9px;box-sizing:border-box;background:#f57a30"></div>
<div class="t" style="left:815px;top:136px;font-size:13.3px;color:#ffffff;font-weight:normal;font-family:'Liberation Sans',sans-serif;">Outer wall</div>
<div class="t" style="left:927px;top:136px;font-size:13px;color:#ffffff;font-weight:normal;font-family:'Liberation Sans',sans-serif;">5m</div>
<div class="t" style="left:964px;top:136px;font-size:13px;color:#ffffff;font-weight:normal;font-family:'Liberation Sans',sans-serif;">22.5%</div>
<div style="position:absolute;left:1068px;top:138px;width:15px;height:15px;box-sizing:border-box;background:#585858"></div>
<svg style="position:absolute;left:1068px;top:138px;overflow:visible;" width="15" height="15" viewBox="0 0 15 15"><path d="M2.8,8 L6,11 L12.4,4.5" fill="none" stroke="#00b346" stroke-width="2"/></svg>
<div style="position:absolute;left:798px;top:162px;width:9px;height:9px;box-sizing:border-box;background:#ab2e28"></div>
<div class="t" style="left:815px;top:155px;font-size:13.3px;color:#ffffff;font-weight:normal;font-family:'Liberation Sans',sans-serif;">Sparse infill</div>
<div class="t" style="left:927px;top:155px;font-size:13px;color:#ffffff;font-weight:normal;font-family:'Liberation Sans',sans-serif;">10m</div>
<div class="t" style="left:964px;top:155px;font-size:13px;color:#ffffff;font-weight:normal;font-family:'Liberation Sans',sans-serif;">47.6%</div>
<div style="position:absolute;left:1068px;top:157px;width:15px;height:15px;box-sizing:border-box;background:#585858"></div>
<svg style="position:absolute;left:1068px;top:157px;overflow:visible;" width="15" height="15" viewBox="0 0 15 15"><path d="M2.8,8 L6,11 L12.4,4.5" fill="none" stroke="#00b346" stroke-width="2"/></svg>
<div style="position:absolute;left:798px;top:181px;width:9px;height:9px;box-sizing:border-box;background:#9650cc"></div>
<div class="t" style="left:815px;top:174px;font-size:13.3px;color:#ffffff;font-weight:normal;font-family:'Liberation Sans',sans-serif;">Internal solid infill</div>
<div class="t" style="left:927px;top:174px;font-size:13px;color:#ffffff;font-weight:normal;font-family:'Liberation Sans',sans-serif;">1m</div>
<div class="t" style="left:964px;top:174px;font-size:13px;color:#ffffff;font-weight:normal;font-family:'Liberation Sans',sans-serif;">6.0%</div>
<div style="position:absolute;left:1068px;top:176px;width:15px;height:15px;box-sizing:border-box;background:#585858"></div>
<svg style="position:absolute;left:1068px;top:176px;overflow:visible;" width="15" height="15" viewBox="0 0 15 15"><path d="M2.8,8 L6,11 L12.4,4.5" fill="none" stroke="#00b346" stroke-width="2"/></svg>
<div style="position:absolute;left:798px;top:200px;width:9px;height:9px;box-sizing:border-box;background:#ee3d3d"></div>
<div class="t" style="left:815px;top:193px;font-size:13.3px;color:#ffffff;font-weight:normal;font-family:'Liberation Sans',sans-serif;">Top surface</div>
<div class="t" style="left:927px;top:193px;font-size:13px;color:#ffffff;font-weight:normal;font-family:'Liberation Sans',sans-serif;">30s</div>
<div class="t" style="left:964px;top:193px;font-size:13px;color:#ffffff;font-weight:normal;font-family:'Liberation Sans',sans-serif;">2.3%</div>
<div style="position:absolute;left:1068px;top:195px;width:15px;height:15px;box-sizing:border-box;background:#585858"></div>
<svg style="position:absolute;left:1068px;top:195px;overflow:visible;" width="15" height="15" viewBox="0 0 15 15"><path d="M2.8,8 L6,11 L12.4,4.5" fill="none" stroke="#00b346" stroke-width="2"/></svg>
<div style="position:absolute;left:798px;top:219px;width:9px;height:9px;box-sizing:border-box;background:#6a5fd6"></div>
<div class="t" style="left:815px;top:212px;font-size:13.3px;color:#ffffff;font-weight:normal;font-family:'Liberation Sans',sans-serif;">Bottom surface</div>
<div class="t" style="left:927px;top:212px;font-size:13px;color:#ffffff;font-weight:normal;font-family:'Liberation Sans',sans-serif;">39s</div>
<div class="t" style="left:964px;top:212px;font-size:13px;color:#ffffff;font-weight:normal;font-family:'Liberation Sans',sans-serif;">3.1%</div>
<div style="position:absolute;left:1068px;top:214px;width:15px;height:15px;box-sizing:border-box;background:#585858"></div>
<svg style="position:absolute;left:1068px;top:214px;overflow:visible;" width="15" height="15" viewBox="0 0 15 15"><path d="M2.8,8 L6,11 L12.4,4.5" fill="none" stroke="#00b346" stroke-width="2"/></svg>
<div style="position:absolute;left:798px;top:238px;width:9px;height:9px;box-sizing:border-box;background:#4d80c0"></div>
<div class="t" style="left:815px;top:231px;font-size:13.3px;color:#ffffff;font-weight:normal;font-family:'Liberation Sans',sans-serif;">Bridge</div>
<div class="t" style="left:927px;top:231px;font-size:13px;color:#ffffff;font-weight:normal;font-family:'Liberation Sans',sans-serif;">23s</div>
<div class="t" style="left:964px;top:231px;font-size:13px;color:#ffffff;font-weight:normal;font-family:'Liberation Sans',sans-serif;">1.8%</div>
<div style="position:absolute;left:1068px;top:233px;width:15px;height:15px;box-sizing:border-box;background:#585858"></div>
<svg style="position:absolute;left:1068px;top:233px;overflow:visible;" width="15" height="15" viewBox="0 0 15 15"><path d="M2.8,8 L6,11 L12.4,4.5" fill="none" stroke="#00b346" stroke-width="2"/></svg>
<div style="position:absolute;left:798px;top:257px;width:9px;height:9px;box-sizing:border-box;background:#ffffff"></div>
<div class="t" style="left:815px;top:250px;font-size:13.3px;color:#ffffff;font-weight:normal;font-family:'Liberation Sans',sans-serif;">Gap infill</div>
<div class="t" style="left:927px;top:250px;font-size:13px;color:#ffffff;font-weight:normal;font-family:'Liberation Sans',sans-serif;">2s</div>
<div class="t" style="left:964px;top:250px;font-size:13px;color:#ffffff;font-weight:normal;font-family:'Liberation Sans',sans-serif;">0.2%</div>
<div style="position:absolute;left:1068px;top:252px;width:15px;height:15px;box-sizing:border-box;background:#585858"></div>
<svg style="position:absolute;left:1068px;top:252px;overflow:visible;" width="15" height="15" viewBox="0 0 15 15"><path d="M2.8,8 L6,11 L12.4,4.5" fill="none" stroke="#00b346" stroke-width="2"/></svg>
<div style="position:absolute;left:798px;top:276px;width:9px;height:9px;box-sizing:border-box;background:#3a48a8"></div>
<div class="t" style="left:815px;top:269px;font-size:13.3px;color:#ffffff;font-weight:normal;font-family:'Liberation Sans',sans-serif;">Travel</div>
<div style="position:absolute;left:1068px;top:271px;width:15px;height:15px;box-sizing:border-box;background:#585858"></div>
<div style="position:absolute;left:798px;top:295px;width:9px;height:9px;box-sizing:border-box;background:#e6e6e6"></div>
<div class="t" style="left:815px;top:288px;font-size:13.3px;color:#ffffff;font-weight:normal;font-family:'Liberation Sans',sans-serif;">Seams</div>
<div style="position:absolute;left:1068px;top:290px;width:15px;height:15px;box-sizing:border-box;background:#585858"></div>
<div class="t" style="left:797px;top:316px;font-size:13.3px;color:#ffffff;font-weight:normal;font-family:'Liberation Sans',sans-serif;">Total estimation</div>
<div style="position:absolute;left:792px;top:337px;width:323px;height:1px;box-sizing:border-box;background:#b8b8b8"></div>
<div class="t" style="left:797px;top:339px;font-size:13px;color:#ffffff;font-weight:normal;font-family:'Liberation Sans',sans-serif;">Filament:</div>
<div class="t" style="left:923px;top:339px;font-size:13px;color:#ffffff;font-weight:normal;font-family:'Liberation Sans',sans-serif;">1.53 m</div>
<div class="t" style="left:978px;top:339px;font-size:13px;color:#ffffff;font-weight:normal;font-family:'Liberation Sans',sans-serif;">4.56 g</div>
<div class="t" style="left:797px;top:358px;font-size:13px;color:#ffffff;font-weight:normal;font-family:'Liberation Sans',sans-serif;">Prepare time:</div>
<div class="t" style="left:924px;top:358px;font-size:13px;color:#ffffff;font-weight:normal;font-family:'Liberation Sans',sans-serif;">1s</div>
<div class="t" style="left:797px;top:377px;font-size:13px;color:#ffffff;font-weight:normal;font-family:'Liberation Sans',sans-serif;">Print time:</div>
<div class="t" style="left:924px;top:377px;font-size:13px;color:#ffffff;font-weight:normal;font-family:'Liberation Sans',sans-serif;">21m</div>
<div class="t" style="left:797px;top:396px;font-size:13px;color:#ffffff;font-weight:normal;font-family:'Liberation Sans',sans-serif;">Total time:</div>
<div class="t" style="left:924px;top:396px;font-size:13px;color:#ffffff;font-weight:normal;font-family:'Liberation Sans',sans-serif;">21m</div>
<div style="position:absolute;left:407px;top:374px;width:508px;height:159px;box-sizing:border-box;background:#fff;border:1px solid #a8a8a8;border-radius:7px;box-shadow:0 6px 28px rgba(0,0,0,0.2)"></div>
<div class="t" style="left:416px;top:380px;font-size:12px;color:#8a8a8a;font-weight:normal;font-family:'Liberation Sans',sans-serif;">Send to print</div>
<svg style="position:absolute;left:894px;top:383px;overflow:visible;" width="12" height="12" viewBox="0 0 12 12"><path d="M1,1 L11,11 M11,1 L1,11" stroke="#7a7a7a" stroke-width="1.1"/></svg>
<div style="position:absolute;left:443px;top:425px;width:64px;height:64px;box-sizing:border-box;background:#00ae42;border-radius:15px"></div>
<svg style="position:absolute;left:443px;top:425px;overflow:visible;" width="64" height="64" viewBox="0 0 64 64"><path d="M17,13 H31 V31.2 L17,35.8 Z M17,37.8 L31,33.2 V51 H17 Z M33,13 H46 V29.6 L33,24.6 Z M33,26.6 L46,31.6 V51 H33 Z" fill="#fff"/></svg>
<div style="position:absolute;left:527px;top:425px;width:388px;height:27px;box-sizing:border-box;border:1px solid #dcdcdc;border-bottom:1px solid #8a8a8a;border-right:none;background:#fff"></div>
<div class="t" style="left:534px;top:429px;font-size:14px;color:#1a1a1a;font-weight:normal;font-family:'Liberation Sans',sans-serif;">Cylinder_PLA_21m.gcode</div>
<div class="t" style="left:527px;top:454px;font-size:14.8px;color:#1a1a1a;font-weight:normal;font-family:'Liberation Sans',sans-serif;">Use forward slashes ( / ) as a directory separator if needed.</div>
<div style="position:absolute;left:563px;top:489px;width:76px;height:24px;box-sizing:border-box;background:#00ae42;border-radius:12px"></div>
<div class="t" style="left:576px;top:492px;font-size:15px;color:#ffffff;font-weight:normal;font-family:'Liberation Sans',sans-serif;">Upload</div>
<div style="position:absolute;left:659px;top:489px;width:120px;height:24px;box-sizing:border-box;background:#00ae42;border-radius:12px"></div>
<div class="t" style="left:663px;top:492px;font-size:15px;color:#ffffff;font-weight:normal;font-family:'Liberation Sans',sans-serif;">Upload and Print</div>
<div style="position:absolute;left:799px;top:489px;width:76px;height:24px;box-sizing:border-box;border:1px solid #3a3a3a;border-radius:12px;background:#fff"></div>
<div class="t" style="left:815px;top:492px;font-size:14.2px;color:#1f2426;font-weight:normal;font-family:'Liberation Sans',sans-serif;">Cancel</div>
<div style="position:absolute;left:1225px;top:0px;width:6px;height:849px;box-sizing:border-box;background:#1b1b1b"></div>
<div style="position:absolute;left:0px;top:844px;width:1231px;height:5px;box-sizing:border-box;background:#1b1b1b"></div>
<svg style="position:absolute;left:0px;top:838px;overflow:visible;" width="6" height="6" viewBox="0 0 6 6"><path d="M0,0 V6 H6 A6,6 0 0 1 0,0 Z" fill="#1b1b1b"/></svg>
<svg style="position:absolute;left:1219px;top:838px;overflow:visible;" width="6" height="6" viewBox="0 0 6 6"><path d="M6,0 V6 H0 A6,6 0 0 0 6,0 Z" fill="#1b1b1b"/></svg>
<div class="t" style="left:240px;top:841px;font-size:11.7px;color:#d0d0d0;font-weight:normal;font-family:'Liberation Mono',sans-serif;">libslic3r_cgal.vcxproj -&gt; C:\Codes\BambuStudio_SoftFever\build\src\libslic3r\RelWithDebInfo\libslic3r_cgal.lib</div>
</body></html>
